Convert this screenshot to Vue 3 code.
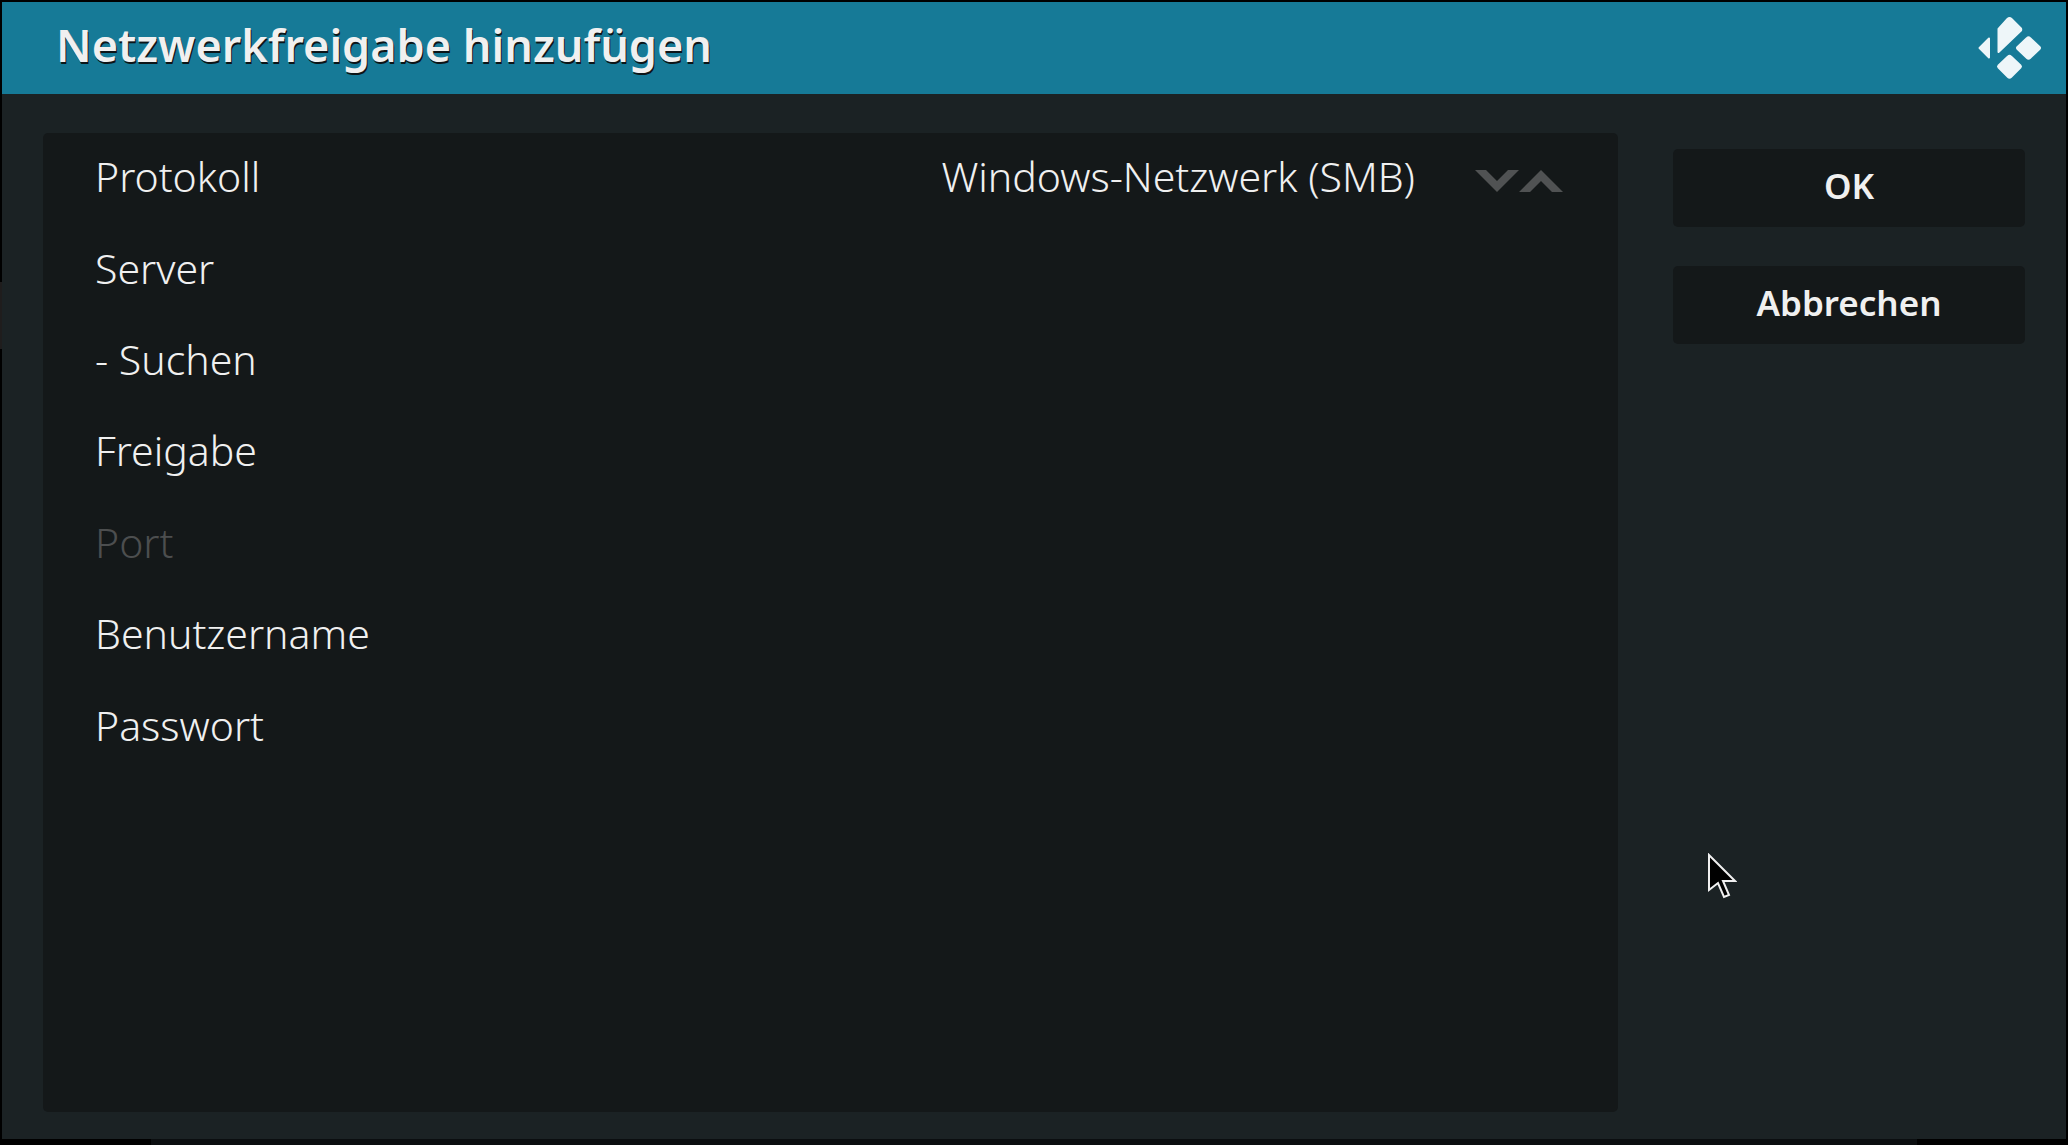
<script setup>
import { ref } from 'vue'

const protocol = ref('smb')
const fields = ref([
  { id: 'server', label: 'Server', type: 'text', value: '' },
  { id: 'browse', label: '- Suchen', type: 'action' },
  { id: 'share', label: 'Freigabe', type: 'text', value: '' },
  { id: 'port', label: 'Port', type: 'text', value: '', disabled: true },
  { id: 'user', label: 'Benutzername', type: 'text', value: '' },
  { id: 'password', label: 'Passwort', type: 'password', value: '' },
])
</script>

<template>
  <div class="screen">
    <span class="backdrop-side" aria-hidden="true"></span>
    <main class="dialog">
      <header class="titlebar">
        <h1>Netzwerkfreigabe hinzufügen</h1>
        <svg class="logo" viewBox="0 0 64 64" aria-hidden="true">
          <g fill="#eef6f9" stroke="#eef6f9" stroke-width="2" stroke-linejoin="round">
            <path d="M1.500 32 11 22.500V41.500Z" />
            <path d="M20.500 13 29.500 3Q31.500 1 33.500 3L43 12.500Q43.500 13.500 43 14.500L20.500 36Z" />
            <path d="M49 22Q50.500 20.500 52 22L61.500 31Q62.500 32 61.500 33L52 42Q50.500 43.500 49 42L39.500 33Q38.500 32 39.500 31Z" />
            <path d="M30 40.500Q31.500 39 33 40.500L42.500 49.500Q43.500 50.500 42.500 51.500L33 61Q31.500 62.500 30 61L20.500 51.500Q19.500 50.500 20.500 49.500Z" />
          </g>
        </svg>
      </header>
      <form class="content" @submit.prevent>
        <div class="panel">
          <div class="rows">
            <div class="row">
              <label for="protocol">Protokoll</label>
              <select id="protocol" v-model="protocol">
                <option value="smb">Windows-Netzwerk (SMB)</option>
              </select>
              <div class="spin">
                <button type="button" aria-label="Nächstes Protokoll">
                  <svg viewBox="0 0 44 22"><path d="M0 0H11L22 11 33 0H44L22 22Z" /></svg>
                </button>
                <button type="button" aria-label="Vorheriges Protokoll">
                  <svg viewBox="0 0 44 22"><path d="M0 22H11L22 11 33 22H44L22 0Z" /></svg>
                </button>
              </div>
            </div>
            <div v-for="f in fields" :key="f.id" class="row" :class="{ disabled: f.disabled }">
              <button v-if="f.type === 'action'" type="button" class="action">{{ f.label }}</button>
              <template v-else>
                <label :for="f.id">{{ f.label }}</label>
                <input :id="f.id" v-model="f.value" :type="f.type" :disabled="f.disabled" autocomplete="off" />
              </template>
            </div>
          </div>
        </div>
        <div class="buttons">
          <button type="submit">OK</button>
          <button type="button">Abbrechen</button>
        </div>
      </form>
    </main>
    <svg class="pointer" viewBox="0 0 30 46" aria-hidden="true">
      <path d="M2 2V37L11 30 17 44 22 42 16 28H28Z" fill="#000" stroke="#f0f0f0" stroke-width="2" />
    </svg>
  </div>
</template>

<style>
body {
  margin: 0;
  background: #000;
}
</style>

<style scoped>
.screen {
  position: relative;
  box-sizing: border-box;
  min-height: 100vh;
  padding: 2px 2px 6px;
  display: flex;
  background: linear-gradient(#0b0e10, #0b0e10) 151px 100% / calc(100% - 302px) 6px no-repeat #000;
  font-family: "Noto Sans", "Open Sans", sans-serif;
  color: #f0f0f0;
}
.backdrop-side {
  position: absolute;
  left: 0;
  top: 282px;
  width: 2px;
  height: 67px;
  background: #1f1d1d;
}
.dialog {
  flex: 1;
  display: flex;
  flex-direction: column;
  background: #1b2224;
}
.titlebar {
  height: 92px;
  padding: 0 24px 0 54px;
  display: flex;
  align-items: center;
  justify-content: space-between;
  background: #167a97;
}
h1 {
  margin: 0;
  padding-bottom: 6px;
  font-size: 45px;
  line-height: 60px;
  font-weight: 600;
  text-shadow: 1px 2px 0 #0c1518;
}
.logo {
  width: 64px;
  height: 64px;
}
.content {
  flex: 1;
  display: flex;
  gap: 55px;
  padding: 39px 41px 27px;
}
.panel {
  flex: 1;
  border-radius: 5px;
  background: #141819;
}
.rows {
  height: 640px;
  display: flex;
  flex-direction: column;
}
.row {
  flex: 1;
  display: flex;
  align-items: center;
  padding: 0 55px 5px 52px;
  font-size: 41px;
  font-weight: 300;
}
.row.disabled {
  color: #4c4e4f;
}
.row input,
.row select,
.action {
  appearance: none;
  border: 0;
  margin: 0;
  padding: 0;
  background: none;
  color: inherit;
  font: inherit;
  outline: none;
}
.row input,
.row select {
  flex: 1;
  min-width: 0;
  text-align: right;
  text-align-last: right;
}
.action {
  flex: 1;
  text-align: left;
}
.spin {
  display: flex;
  margin-left: 60px;
  padding-top: 10px;
}
.spin button {
  display: flex;
  border: 0;
  padding: 0;
  background: none;
}
.spin svg {
  width: 44px;
  height: 22px;
  fill: #505253;
}
.buttons {
  width: 352px;
  display: flex;
  flex-direction: column;
  gap: 39px;
  padding-top: 16px;
}
.buttons button {
  height: 78px;
  border: 0;
  border-radius: 5px;
  padding: 0 0 5px;
  background: #141819;
  color: inherit;
  font: 600 35px "Noto Sans", "Open Sans", sans-serif;
}
.pointer {
  position: absolute;
  left: 1707px;
  top: 853px;
  width: 30px;
  height: 46px;
}
</style>
